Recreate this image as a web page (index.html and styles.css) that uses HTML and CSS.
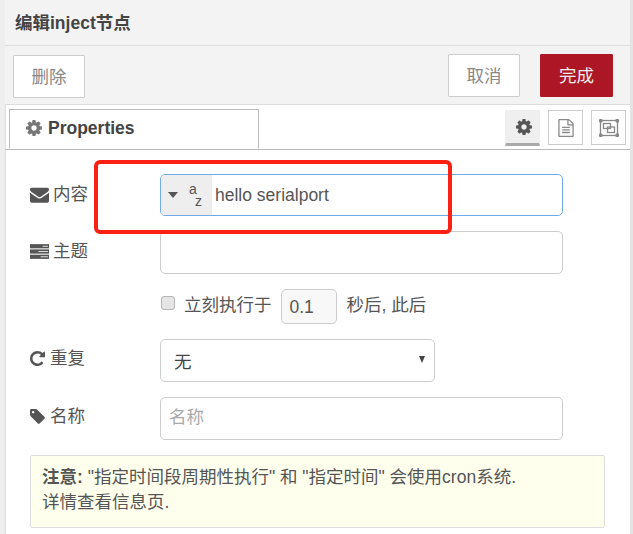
FILE: index.html
```html
<!DOCTYPE html>
<html lang="en">
<head>
    <meta charset="UTF-8">
    <meta name="viewport" content="width=device-width, initial-scale=1.0">
    <title>编辑inject节点</title>
    <link rel="stylesheet" href="styles.css">
</head>
<body>
    <div class="tray">
        <div class="tray-title">编辑inject节点</div>
        <div class="tray-toolbar">
            <button class="btn">删除</button>
            <div class="toolbar-right">
                <button class="btn">取消</button>
                <button class="btn btn-primary">完成</button>
            </div>
        </div>
        <div class="tabs">
            <div class="tab">
                <svg class="icon icon-gray" viewBox="0 0 1536 1536"><path d="M1024 768q0-106-75-181t-181-75-181 75-75 181 75 181 181 75 181-75 75-181zm512-109v222q0 12-8 23t-20 13l-185 28q-19 54-39 91 35 50 107 138 10 12 10 25t-9 23q-27 37-99 108t-94 71q-12 0-26-9l-138-108q-44 23-91 38-16 136-29 186-7 28-36 28h-222q-14 0-24.500-8.500t-11.500-21.500l-28-184q-49-16-90-37l-141 107q-10 9-25 9-14 0-25-11-126-114-165-168-7-10-7-23 0-12 8-23 15-21 51-66.500t54-70.500q-27-50-41-99l-183-27q-13-2-21-12.500t-8-23.500v-222q0-12 8-23t19-13l186-28q14-46 39-92-40-57-107-138-10-12-10-24 0-10 9-23 26-36 98.500-107.500t94.500-71.500q13 0 26 10l138 107q44-23 91-38 16-136 29-186 7-28 36-28h222q14 0 24.500 8.500t11.500 21.500l28 184q49 16 90 37l142-107q9-9 24-9 13 0 25 10 129 119 165 170 7 8 7 22 0 12-8 23-15 21-51 66.500t-54 70.500q26 50 41 98l183 28q13 2 21 12.500t8 23.500z"/></svg>
                Properties
            </div>
            <div class="tab-links">
                <a class="tab-link active">
                    <svg class="icon" viewBox="0 0 1536 1536"><path d="M1024 768q0-106-75-181t-181-75-181 75-75 181 75 181 181 75 181-75 75-181zm512-109v222q0 12-8 23t-20 13l-185 28q-19 54-39 91 35 50 107 138 10 12 10 25t-9 23q-27 37-99 108t-94 71q-12 0-26-9l-138-108q-44 23-91 38-16 136-29 186-7 28-36 28h-222q-14 0-24.500-8.500t-11.500-21.500l-28-184q-49-16-90-37l-141 107q-10 9-25 9-14 0-25-11-126-114-165-168-7-10-7-23 0-12 8-23 15-21 51-66.500t54-70.500q-27-50-41-99l-183-27q-13-2-21-12.500t-8-23.500v-222q0-12 8-23t19-13l186-28q14-46 39-92-40-57-107-138-10-12-10-24 0-10 9-23 26-36 98.500-107.500t94.500-71.500q13 0 26 10l138 107q44-23 91-38 16-136 29-186 7-28 36-28h222q14 0 24.500 8.500t11.500 21.500l28 184q49 16 90 37l142-107q9-9 24-9 13 0 25 10 129 119 165 170 7 8 7 22 0 12-8 23-15 21-51 66.500t-54 70.500q26 50 41 98l183 28q13 2 21 12.500t8 23.500z"/></svg>
                </a>
                <a class="tab-link">
                    <svg class="icon icon-file" viewBox="128 0 1536 1792"><path d="M1596 380q28 28 48 76t20 88v1152q0 40-28 68t-68 28h-1344q-40 0-68-28t-28-68v-1600q0-40 28-68t68-28h896q40 0 88 20t76 48zm-444-244v376h376q-10-29-22-41l-313-313q-12-12-41-22zm384 1528v-1024h-416q-40 0-68-28t-28-68v-416h-768v1536h1280zm-1024-864q0-14 9-23t23-9h704q14 0 23 9t9 23v64q0 14-9 23t-23 9h-704q-14 0-23-9t-9-23v-64zm736 224q14 0 23 9t9 23v64q0 14-9 23t-23 9h-704q-14 0-23-9t-9-23v-64q0-14 9-23t23-9h704zm0 256q14 0 23 9t9 23v64q0 14-9 23t-23 9h-704q-14 0-23-9t-9-23v-64q0-14 9-23t23-9h704z"/></svg>
                </a>
                <a class="tab-link">
                    <svg class="icon icon-group" viewBox="0 0 20 18">
                        <rect class="frame" x="1.500" y="1.500" width="17" height="15"/>
                        <rect class="frame" x="4.500" y="4.500" width="7" height="5"/>
                        <rect class="frame" x="8.500" y="8" width="7" height="5.500"/>
                        <rect x="0" y="0" width="3.500" height="3.500" rx="1"/>
                        <rect x="16.500" y="0" width="3.500" height="3.500" rx="1"/>
                        <rect x="0" y="14.500" width="3.500" height="3.500" rx="1"/>
                        <rect x="16.500" y="14.500" width="3.500" height="3.500" rx="1"/>
                    </svg>
                </a>
            </div>
        </div>
        <div class="form">
            <div class="row row-payload">
                <label class="row-label">
                    <svg class="icon" viewBox="0 0 1792 1792"><path d="M1792 710v794q0 66-47 113t-113 47h-1472q-66 0-113-47t-47-113v-794q44 49 101 87 362 246 497 345 57 42 92.500 65.500t94.500 48 110 24.500h2q51 0 110-24.500t94.500-48 92.500-65.500q170-123 498-345 57-39 100-87zm0-294q0 79-49 151t-122 123q-376 261-468 325-10 7-42.500 30.500t-54 38-52 32.500-57.500 27-50 9h-2q-23 0-50-9t-57.500-27-52-32.500-54-38-42.500-30.500q-91-64-262-182.500t-205-142.500q-62-42-117-115.500t-55-136.500q0-78 41.500-130t118.500-52h1472q65 0 112.500 47t47.500 113z"/></svg>
                    内容
                </label>
                <div class="typed-input">
                    <div class="type-select">
                        <span class="caret"></span>
                        <span class="az"><span>a</span><span class="az-z">z</span></span>
                    </div>
                    <span class="typed-value">hello serialport</span>
                </div>
            </div>
            <div class="row row-topic">
                <label class="row-label">
                    <svg class="icon" viewBox="0 0 18 14">
                        <path d="M0 0h18v4H0z"/><path d="M0 5h18v4H0z"/><path d="M0 10h18v4H0z"/>
                        <path class="stripe" d="M12 1.500h5v1h-5zM8 6.500h9v1H8zM10 11.500h7v1h-7z"/>
                    </svg>
                    主题
                </label>
                <div class="input"></div>
            </div>
            <div class="row row-once">
                <span class="checkbox"></span>
                <span class="once-label">立刻执行于</span>
                <div class="input input-number">0.1</div>
                <span class="once-after">秒后, 此后</span>
            </div>
            <div class="row row-repeat">
                <label class="row-label row-label-tight">
                    <svg class="icon" viewBox="128 128 1536 1536"><path d="M1664 256v448q0 26-19 45t-45 19h-448q-42 0-59-40-17-39 14-69l138-138q-148-137-349-137-104 0-198.500 40.500t-163.500 109.500-109.500 163.500-40.500 198.500 40.500 198.500 109.500 163.500 163.500 109.500 198.500 40.500q119 0 225-52t179-147q7-10 23-12 15 0 25 9l137 138q9 8 9.500 20.500t-7.500 22.500q-109 132-264 204.500t-327 72.500q-156 0-298-61t-245-164-164-245-61-298 61-298 164-245 245-164 298-61q147 0 284.500 55.500t244.500 156.500l130-129q29-31 70-14 39 17 39 59z"/></svg>
                    重复
                </label>
                <div class="input input-select">
                    <span class="select-value">无</span>
                    <span class="select-arrow"></span>
                </div>
            </div>
            <div class="row row-name">
                <label class="row-label row-label-tight">
                    <svg class="icon" viewBox="128 128 1536 1536"><path d="M576 448q0-53-37.500-90.500t-90.500-37.500-90.500 37.500-37.500 90.500 37.500 90.500 90.500 37.500 90.500-37.500 37.500-90.500zm1067 576q0 53-37 90l-491 492q-39 37-91 37-53 0-90-37l-715-716q-38-37-64.500-101t-26.500-117v-416q0-52 38-90t90-38h416q53 0 117 26.500t102 64.500l715 714q37 39 37 91z"/></svg>
                    名称
                </label>
                <div class="input input-placeholder">名称</div>
            </div>
            <div class="tip"><b>注意:</b> "指定时间段周期性执行" 和 "指定时间" 会使用cron系统.<br>详情查看信息页.</div>
        </div>
        <div class="annotation"></div>
    </div>
</body>
</html>
```

FILE: styles.css
```css
* {
    box-sizing: border-box;
}
html, body {
    height: 100%;
}
body {
    margin: 0;
    font-family: "Liberation Sans", "Noto Sans CJK SC", sans-serif;
    font-size: 17.5px;
    color: #555;
    background: #fff;
    overflow: hidden;
}
.tray {
    position: relative;
    width: 633px;
    height: 534px;
    border-left: 5px solid #eee;
    border-right: 3px solid #e4e4e4;
    box-shadow: inset 1px 0 0 #ddd;
    overflow: hidden;
}
.tray-title {
    height: 46px;
    padding: 15px 0 0 10px;
    font-weight: bold;
    font-size: 17.5px;
    line-height: 17px;
    color: #444;
    background: #f3f3f3;
    border-bottom: 1px solid #ddd;
}
.tray-toolbar {
    display: flex;
    justify-content: space-between;
    height: 59px;
    padding: 9px 17px 0 8px;
    background: #f3f3f3;
    border-bottom: 1px solid #ddd;
}
.toolbar-right {
    display: flex;
    gap: 20px;
    margin-top: -1px;
}
.btn {
    width: 72px;
    height: 43px;
    padding: 0 0 2px;
    font: inherit;
    color: #888;
    background: #fff;
    border: 1px solid #ccc;
    border-radius: 1px;
}
.btn-primary {
    width: 73px;
    color: #eee;
    background: #ad1625;
    border-color: #ad1625;
}
.tabs {
    display: flex;
    justify-content: space-between;
    height: 45px;
    padding: 4px 4px 0 4px;
    border-bottom: 1px solid #bbb;
}
.tab {
    display: flex;
    align-items: center;
    gap: 6px;
    width: 250px;
    height: 40px;
    padding: 0 0 2px 16px;
    font-weight: bold;
    color: #444;
    background: #fff;
    border: 1px solid #bbb;
    border-bottom-color: #fff;
}
.tab-links {
    display: flex;
    gap: 8px;
    padding-top: 1px;
}
.tab-link {
    display: flex;
    align-items: center;
    justify-content: center;
    width: 35px;
    height: 35px;
    border: 1px solid #ccc;
    background: #fff;
}
.tab-link.active {
    padding-left: 2px;
    background: #efefef;
    border-color: #efefef;
    border-bottom: 3px solid #aaa;
    height: 36px;
}
.icon {
    width: 16px;
    height: 16px;
    flex: none;
    fill: #555;
}
.icon-gray {
    fill: #777;
}
.icon-file {
    width: 16px;
    height: 18px;
    fill: #888;
}
.icon-group {
    width: 20px;
    height: 18px;
    fill: #888;
}
.icon-group .frame {
    fill: none;
    stroke: #888;
    stroke-width: 1.300;
}
.stripe {
    fill: #ddd;
}
.form {
    padding: 24px 0 0 25px;
}
.row {
    display: flex;
    align-items: flex-start;
}
.row-label {
    display: flex;
    align-items: center;
    gap: 4px;
    width: 130px;
    flex: none;
    padding-top: 10px;
    line-height: 20px;
}
.row-label .icon {
    width: 19px;
    height: 19px;
}
.row-label-tight {
    gap: 5px;
    padding-top: 9px;
}
.row-label-tight .icon {
    width: 15px;
    height: 15px;
}
.input {
    width: 403px;
    height: 43px;
    border: 1px solid #ccc;
    border-radius: 5px;
    background: #fff;
}
.typed-input {
    display: flex;
    width: 403px;
    height: 42px;
    border: 1px solid #72a9e8;
    border-radius: 5px;
    overflow: hidden;
}
.type-select {
    display: flex;
    align-items: center;
    width: 51px;
    padding-left: 7px;
    background: #eee;
}
.caret {
    width: 0;
    height: 0;
    border-left: 5.500px solid transparent;
    border-right: 5.500px solid transparent;
    border-top: 6px solid #555;
}
.az {
    display: flex;
    flex-direction: column;
    gap: 2px;
    margin-left: 11px;
    font-size: 14px;
    line-height: 10px;
}
.az-z {
    margin-left: 6px;
}
.typed-value {
    padding-left: 3px;
    line-height: 40px;
    white-space: nowrap;
}
.row-topic {
    margin-top: 15px;
}
.row-once {
    margin-top: 15px;
    padding-left: 131px;
    align-items: center;
    height: 35px;
}
.checkbox {
    width: 14px;
    height: 14px;
    margin-top: -7px;
    background: #e5e5e5;
    border: 1px solid #b5b5b5;
    border-radius: 3px;
    flex: none;
}
.once-label {
    margin-left: 9px;
    margin-top: -6px;
}
.input-number {
    width: 56px;
    height: 35px;
    margin-left: 9px;
    padding-left: 8px;
    line-height: 35px;
    background: #f8f8f8;
}
.once-after {
    margin-left: 10px;
    margin-top: -6px;
}
.row-repeat {
    margin-top: 15px;
}
.input-select {
    display: flex;
    align-items: center;
    justify-content: space-between;
    width: 275px;
    padding: 0 9px 0 13px;
}
.select-value {
    color: #444;
}
.select-arrow {
    width: 0;
    height: 0;
    margin-top: -3px;
    border-left: 3.500px solid transparent;
    border-right: 3.500px solid transparent;
    border-top: 7px solid #444;
}
.row-name {
    margin-top: 15px;
}
.input-placeholder {
    padding-left: 8px;
    line-height: 39px;
    color: #aaa;
}
.tip {
    width: 575px;
    height: 73px;
    margin-top: 15px;
    padding: 9px 11px;
    line-height: 25px;
    background: #ffe;
    border: 1px solid #ddd;
    border-radius: 2px;
}
.annotation {
    position: absolute;
    left: 89px;
    top: 160px;
    width: 358px;
    height: 74px;
    border: 4px solid #fb1f14;
    border-radius: 6px;
}
```
